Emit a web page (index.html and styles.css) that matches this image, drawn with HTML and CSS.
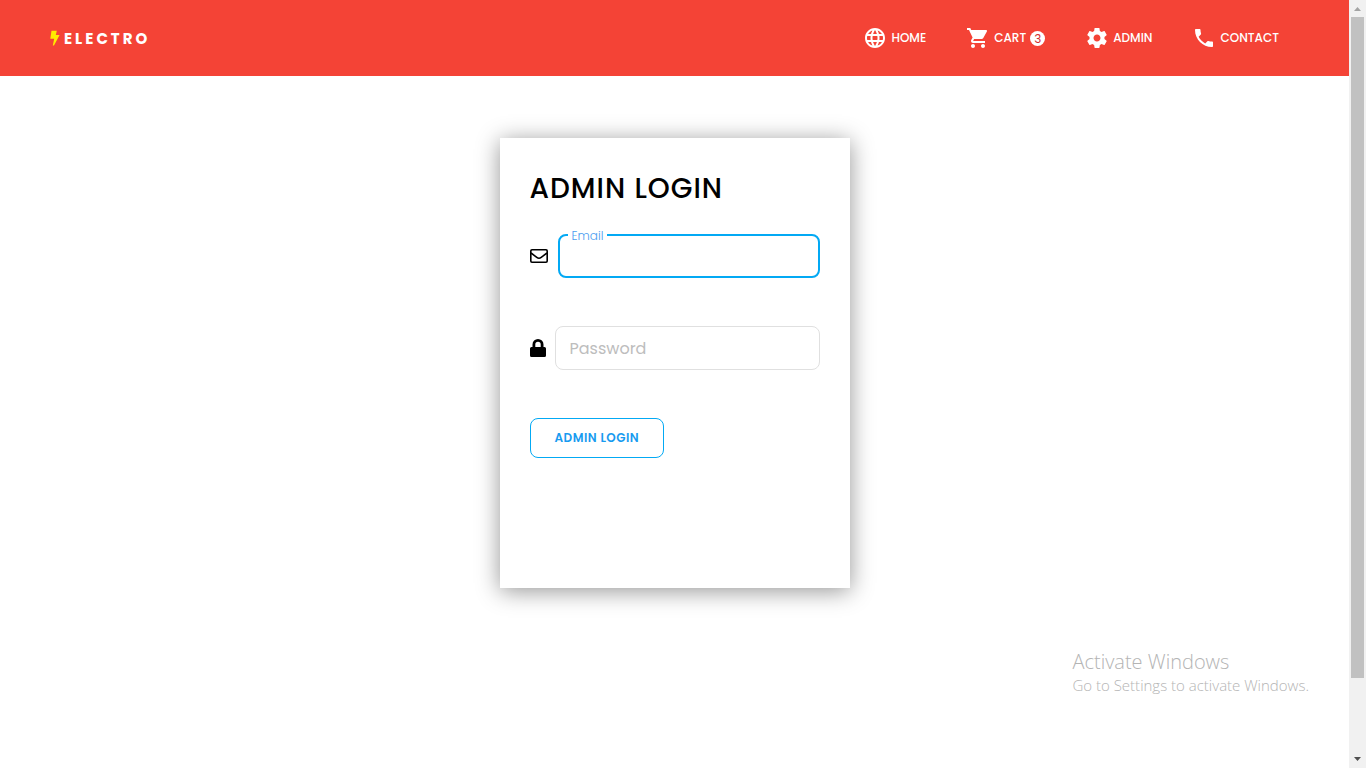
FILE: index.html
```html
<!DOCTYPE html>
<html lang="en">
<head>
<meta charset="utf-8">
<meta name="viewport" content="width=device-width, initial-scale=1">
<title>Electro - Admin Login</title>
<link rel="stylesheet" href="styles.css">
</head>
<body>
<div class="page">
  <header class="navbar">
    <a class="brand" href="#">
      <svg class="bolt" viewBox="0 0 10 16" aria-hidden="true"><path d="M1.500 0.800h5.300L5.800 5H9.600L4 15.400H2.800L4.200 8.800H0.300z"/></svg>
      <span>ELECTRO</span>
    </a>
    <nav class="links">
      <a class="link" href="#">
        <svg class="icon" viewBox="0 0 24 24" aria-hidden="true"><path d="M11.990 2C6.470 2 2 6.480 2 12s4.470 10 9.990 10C17.520 22 22 17.520 22 12S17.520 2 11.990 2zm6.930 6h-2.950c-.32-1.250-.78-2.450-1.380-3.560 1.840.63 3.370 1.910 4.330 3.560zM12 4.040c.83 1.200 1.480 2.530 1.910 3.960h-3.820c.43-1.430 1.080-2.760 1.910-3.960zM4.260 14C4.100 13.360 4 12.690 4 12s.1-1.360.26-2h3.380c-.08.66-.14 1.320-.14 2s.06 1.340.14 2H4.260zm.82 2h2.950c.32 1.250.78 2.450 1.380 3.560-1.840-.63-3.370-1.900-4.330-3.560zm2.950-8H5.080c.96-1.660 2.490-2.930 4.330-3.560C8.810 5.550 8.350 6.750 8.030 8zM12 19.960c-.83-1.200-1.480-2.530-1.910-3.960h3.820c-.43 1.430-1.080 2.760-1.910 3.960zM14.340 14H9.660c-.09-.66-.16-1.320-.16-2s.07-1.350.16-2h4.680c.09.65.16 1.320.16 2s-.07 1.340-.16 2zm.25 5.560c.6-1.110 1.060-2.310 1.380-3.560h2.950c-.96 1.650-2.490 2.930-4.330 3.560zM16.360 14c.08-.66.14-1.320.14-2s-.06-1.340-.14-2h3.380c.16.64.26 1.310.26 2s-.1 1.360-.26 2h-3.380z"/></svg>
        <span>HOME</span>
      </a>
      <a class="link" href="#">
        <svg class="icon" viewBox="0 0 24 24" aria-hidden="true"><path d="M7 18c-1.100 0-1.990.9-1.990 2S5.900 22 7 22s2-.9 2-2-.9-2-2-2zM1 2v2h2l3.600 7.590-1.350 2.450c-.16.28-.25.61-.25.96 0 1.100.9 2 2 2h12v-2H7.420c-.14 0-.25-.11-.25-.25l.03-.12.900-1.630h7.450c.75 0 1.410-.41 1.750-1.030l3.580-6.490c.08-.14.12-.31.12-.48 0-.55-.45-1-1-1H5.210l-.94-2H1zm16 16c-1.100 0-1.990.9-1.990 2s.89 2 1.990 2 2-.9 2-2-.9-2-2-2z"/></svg>
        <span>CART</span>
        <span class="badge">3</span>
      </a>
      <a class="link" href="#">
        <svg class="icon" viewBox="0 0 24 24" aria-hidden="true"><path d="M19.430 12.980c.04-.32.07-.64.07-.98s-.03-.66-.07-.98l2.110-1.650c.19-.15.24-.42.12-.64l-2-3.460c-.12-.22-.39-.3-.61-.22l-2.490 1c-.52-.4-1.080-.73-1.690-.98l-.38-2.650C14.460 2.180 14.250 2 14 2h-4c-.25 0-.46.18-.49.42l-.38 2.650c-.61.25-1.170.59-1.690.98l-2.490-1c-.23-.09-.49 0-.61.22l-2 3.460c-.13.22-.07.49.12.64l2.110 1.650c-.04.32-.07.65-.07.98s.03.66.07.98l-2.110 1.650c-.19.15-.24.42-.12.64l2 3.460c.12.22.39.3.61.22l2.490-1c.52.4 1.080.73 1.690.98l.38 2.650c.03.24.24.42.49.42h4c.25 0 .46-.18.49-.42l.38-2.650c.61-.25 1.170-.59 1.690-.98l2.490 1c.23.09.49 0 .61-.22l2-3.460c.12-.22.07-.49-.12-.64l-2.110-1.650zM12 15.500c-1.930 0-3.500-1.570-3.500-3.500s1.570-3.500 3.500-3.500 3.500 1.570 3.500 3.500-1.570 3.500-3.500 3.500z"/></svg>
        <span>ADMIN</span>
      </a>
      <a class="link" href="#">
        <svg class="icon" viewBox="0 0 24 24" aria-hidden="true"><path d="M6.620 10.790c1.440 2.830 3.760 5.140 6.590 6.590l2.200-2.200c.27-.27.67-.36 1.020-.24 1.120.37 2.330.57 3.570.57.55 0 1 .45 1 1V20c0 .55-.45 1-1 1-9.390 0-17-7.610-17-17 0-.55.45-1 1-1h3.500c.55 0 1 .45 1 1 0 1.250.2 2.450.57 3.570.11.35.03.74-.25 1.020l-2.200 2.200z"/></svg>
        <span>CONTACT</span>
      </a>
    </nav>
  </header>

  <main class="content">
    <form class="card">
      <h1 class="title">ADMIN LOGIN</h1>
      <div class="row email-row">
        <svg class="mail" viewBox="0 0 18 14" aria-hidden="true"><rect x="0.800" y="0.800" width="16.400" height="12.400" rx="1.200"/><path d="M1 4l5.800 4.400q2.200 1.600 4.400 0L17 4"/></svg>
        <div class="field">
          <input class="input active" type="email" id="email">
          <label class="float-label" for="email">Email</label>
        </div>
      </div>
      <div class="row">
        <svg class="lock" viewBox="0 0 16 18" aria-hidden="true"><path d="M2.500 8V5.500a5.500 5.500 0 0 1 11 0V8h1a1.500 1.500 0 0 1 1.500 1.500v7a1.500 1.500 0 0 1-1.500 1.500h-13A1.500 1.500 0 0 1 0 16.500v-7A1.500 1.500 0 0 1 1.500 8zM5.300 8h5.400V5.500a2.700 2.700 0 0 0-5.400 0z"/></svg>
        <div class="field">
          <input class="input" type="password" id="password" placeholder="Password" aria-label="Password">
        </div>
      </div>
      <button class="submit" type="submit">ADMIN LOGIN</button>
    </form>
  </main>

  <aside class="notice">
    <p class="notice-title">Activate Windows</p>
    <p class="notice-text">Go to Settings to activate Windows.</p>
  </aside>
</div>
<div class="scrollbar" aria-hidden="true">
  <svg class="arrow up" viewBox="0 0 17 17"><path d="M5 11l3.500-4 3.500 4z"/></svg>
  <div class="track"><div class="thumb"></div></div>
  <svg class="arrow" viewBox="0 0 17 17"><path d="M5 6h7L8.500 10z"/></svg>
</div>
</body>
</html>
```

FILE: styles.css
```css
* { box-sizing: border-box; }

body {
  margin: 0;
  height: 100vh;
  display: flex;
  overflow: hidden;
  background: #fff;
  color: #000;
  font-family: Poppins, Inter, sans-serif;
}

.page {
  flex: 1;
  min-width: 0;
  display: flex;
  flex-direction: column;
}

.navbar {
  display: flex;
  align-items: center;
  justify-content: space-between;
  min-height: 76px;
  padding: 0 70px 0 50px;
  background: #f44336;
  color: #fff;
}

.brand {
  display: flex;
  align-items: center;
  gap: 4px;
  color: #fff;
  font-size: 15px;
  font-weight: 700;
  letter-spacing: 3px;
  text-decoration: none;
}

.bolt { width: 10px; height: 16px; fill: #ffeb00; }

.links { display: flex; gap: 40px; }

.link {
  display: flex;
  align-items: center;
  gap: 4px;
  color: #fff;
  font-size: 12px;
  font-weight: 500;
  text-decoration: none;
}

.icon { width: 24px; height: 24px; fill: currentColor; }

.badge {
  width: 15px;
  height: 15px;
  border-radius: 50%;
  background: #fff;
  color: #d32f2f;
  font-weight: 400;
  line-height: 15px;
  text-align: center;
}

.content {
  display: flex;
  justify-content: center;
  padding-top: 62px;
}

.card {
  width: 350px;
  min-height: 450px;
  padding: 30px;
  background: #fff;
  box-shadow: 0 3px 22px rgba(0, 0, 0, 0.42);
}

.title {
  margin: 0 0 24px;
  font-size: 28px;
  font-weight: 500;
  line-height: 42px;
  letter-spacing: 1px;
}

.row {
  display: flex;
  align-items: center;
  gap: 9px;
  margin-bottom: 48px;
}

.email-row { gap: 10px; }

.mail {
  width: 18px;
  height: 14px;
  fill: none;
  stroke: #000;
  stroke-width: 1.6;
}

.lock { width: 16px; height: 18px; }

.field { position: relative; flex: 1; }

.input {
  display: block;
  width: 100%;
  height: 44px;
  padding: 0 14px;
  border: 1px solid #e0e0e0;
  border-radius: 8px;
  outline: 0;
  background: #fff;
  font: 400 16px/24px Poppins, Inter, sans-serif;
}

.input::placeholder { color: #bdbdbd; opacity: 1; }

.active { border: 2px solid #03a9f4; }

.float-label {
  position: absolute;
  top: -6px;
  left: 10px;
  padding: 0 4px;
  background: #fff;
  color: #4a9cf0;
  font-size: 12px;
  font-weight: 300;
  line-height: 16px;
}

.submit {
  height: 40px;
  padding: 0 24px;
  border: 1px solid #03a9f4;
  border-radius: 8px;
  background: #fff;
  color: #189bf0;
  font: 600 12px/18px Poppins, Inter, sans-serif;
  letter-spacing: 0.04em;
}

.notice {
  align-self: flex-end;
  margin: auto 40px 73px 0;
  color: #b4b4b4;
  font-family: "Segoe UI", "Open Sans", sans-serif;
  font-weight: 300;
}

.notice p { margin: 0; }

.notice-title { font-size: 20px; line-height: 26px; }

.notice-text { font-size: 15px; line-height: 20px; }

.scrollbar {
  width: 17px;
  display: flex;
  flex-direction: column;
  background: #f1f1f1;
}

.arrow { width: 17px; height: 17px; fill: #505050; }

.up { fill: #a3a3a3; }

.track { flex: 1; padding: 0 2px; }

.thumb { height: 90%; background: #c1c1c1; }
```
